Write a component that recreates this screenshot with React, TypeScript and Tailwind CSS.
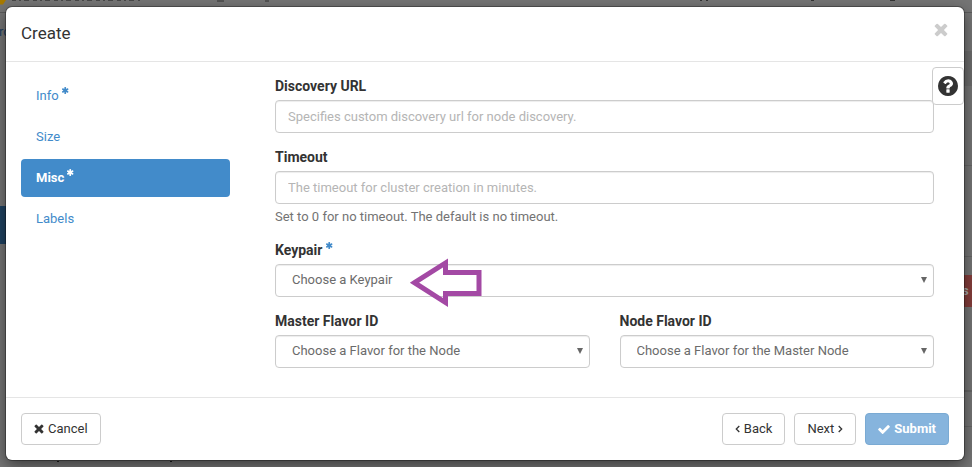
import type { ReactNode } from "react";

type GlyphProps = { d: string; box: string; w: number; h: number };

function Glyph({ d, box: viewBox, w, h }: GlyphProps) {
  return <svg aria-hidden="true" className="shrink-0" width={w} height={h} viewBox={viewBox} fill="currentColor"><path d={d} /></svg>;
}

const timesPath = "M1490 1322q0 40-28 68l-136 136q-28 28-68 28t-68-28l-294-294-294 294q-28 28-68 28t-68-28l-136-136q-28-28-28-68t28-68l294-294-294-294q-28-28-28-68t28-68l136-136q28-28 68-28t68 28l294 294 294-294q28-28 68-28t68 28l136 136q28 28 28 68t-28 68l-294 294 294 294q28 28 28 68z";
const checkPath = "M1671 566q0 40-28 68l-724 724-136 136q-28 28-68 28t-68-28l-136-136-362-362q-28-28-28-68t28-68l136-136q28-28 68-28t68 28l294 295 656-657q28-28 68-28t68 28l136 136q28 28 28 68z";
const questionPath = "M1024 1376v-192q0-14-9-23t-23-9h-192q-14 0-23 9t-9 23v192q0 14 9 23t23 9h192q14 0 23-9t9-23zm256-672q0-88-55.5-163t-138.5-116-170-41q-243 0-371 213-15 24 8 42l132 100q7 6 19 6 16 0 25-12 53-68 86-92 34-24 86-24 48 0 85.5 26t37.5 59q0 38-20 61t-68 45q-63 28-115.5 86.5t-52.5 125.5v36q0 14 9 23t23 9h192q14 0 23-9t9-23q0-19 21.5-49.5t54.5-49.5q32-18 49-28.5t46-35 44.5-48 28-60.5 12.5-81zm384 192q0 209-103 385.5t-279.5 279.5-385.5 103-385.5-103-279.5-279.5-103-385.5 103-385.5 279.5-279.5 385.5-103 385.5 103 279.5 279.5 103 385.5z";
const asteriskPath = "M1482 1050q46 26 59.5 77.5t-12.5 97.5l-64 110q-26 46-77.5 59.5t-97.5-12.5l-266-153v307q0 52-38 90t-90 38h-128q-52 0-90-38t-38-90v-307l-266 153q-46 26-97.5 12.5t-77.5-59.5l-64-110q-26-46-12.5-97.5t59.5-77.5l266-154-266-154q-46-26-59.5-77.5t12.5-97.5l64-110q26-46 77.5-59.5t97.5 12.5l266 153v-307q0-52 38-90t90-38h128q52 0 90 38t38 90v307l266-153q46-26 97.5-12.5t77.5 59.5l64 110q26 46 12.5 97.5t-59.5 77.5l-266 154z";

function Cross({ size }: { size: number }) {
  return <Glyph d={timesPath} box="302 302 1188 1316" w={size} h={size} />;
}

function Chevron({ left }: { left?: boolean }) {
  return (
    <svg aria-hidden="true" width="5" height="8" viewBox="0 0 5 8" fill="none" stroke="currentColor" strokeWidth="1.3">
      <path d={left ? "M4.3 1L1.3 4l3 3" : "M.7 1l3 3-3 3"} />
    </svg>
  );
}

function Star() {
  return <span className="ml-[3px] inline-block align-super"><Glyph d={asteriskPath} box="190 128 1412 1536" w={7} h={7} /></span>;
}

function Field({ id, label, required, children }: { id: string; label: string; required?: boolean; children: ReactNode }) {
  return (
    <div className="mb-[15px] min-w-0 flex-1">
      <label htmlFor={id} className="mb-[5px] flex h-[18px] text-sm font-bold leading-[18px]">
        {label}
        {required && <span className="ml-1 mt-px text-[#428bca]"><Glyph d={asteriskPath} box="190 128 1412 1536" w={7} h={7} /></span>}
      </label>
      {children}
    </div>
  );
}

const control = "block h-[33px] w-full rounded border border-[#ccc] bg-white px-3 pb-px text-[13px] text-[#6b6b6b] shadow-[inset_0_1px_1px_rgba(0,0,0,0.075)] placeholder:text-[#b5b5b5]";

function Select({ id, option }: { id: string; option: string }) {
  return (
    <div className="relative">
      <select id={id} className={control + " appearance-none pl-4"}><option>{option}</option></select>
      <svg aria-hidden="true" className="pointer-events-none absolute right-[7px] top-[13px] text-[#666]" width="6" height="6" viewBox="0 0 6 6"><path d="M0 0h6L3 6z" fill="currentColor" /></svg>
    </div>
  );
}

const button = "flex h-8 items-center gap-1 rounded border border-[#ccc] bg-white px-3";

const tabs = [{ name: "Info", required: true }, { name: "Size" }, { name: "Misc", required: true, active: true }, { name: "Labels" }];

function Backdrop() {
  return (
    <div aria-hidden="true" className="absolute inset-0 bg-[#757575]">
      <div className="absolute inset-x-0 top-3 h-px bg-[#5c5c5c]" />
      <div className="absolute left-0 top-[206px] h-[38px] w-3 bg-[#1f4261]" />
      <div className="absolute -left-px top-[23px] text-[#1f3f5f]">ro</div>
      <div className="absolute right-0 top-[51px] h-[35px] w-3 bg-[#6c6c6c]" />
      <div className="absolute right-0 top-[165px] h-px w-3 bg-[#666]" />
      <div className="absolute right-0 top-64 h-px w-3 bg-[#666]" />
      <div className="absolute right-0 top-[275px] h-8 w-3 bg-[#853d3b] pl-0.5 pt-[7px] font-bold text-[#aaa]">s</div>
      <div className="absolute right-0 top-[390px] h-0.5 w-3 bg-[#666]" />
      <div className="absolute right-0 top-[426px] h-px w-3 bg-[#666]" />
      <svg className="absolute left-0 top-0" width="960" height="5" viewBox="0 0 960 5" fill="none" stroke="#333">
        <path d="M0 0h6L3 4.500H0z" fill="#a87a00" stroke="none" />
        <path d="M12 .5h128" strokeDasharray="4 3 2 3 5 4" stroke="#484848" />
        <path d="M217 1h7M265 1h4M700 .5h2M706 .5h2M811 .5h3M890 .5h5" />
      </svg>
      <svg className="absolute left-[57px] top-[460px]" width="120" height="3" viewBox="0 0 120 3" stroke="#1c1c1c"><path d="M0 1.500h2M113 1.500h2" /></svg>
    </div>
  );
}

export default function App() {
  return (
    <div className="relative min-h-screen overflow-hidden pb-1.5 pl-1.5 pr-2 pt-[7px] font-[Roboto,sans-serif] text-[13px] leading-[18px] text-[#333]">
      <Backdrop />
      <div role="dialog" aria-label="Create" className="relative rounded-md bg-white shadow-[0_0_0_1px_rgba(0,0,0,0.3),0_5px_15px_rgba(0,0,0,0.5)]">
        <header className="flex h-[55px] items-start justify-between border-b border-[#e5e5e5] px-[15px] pt-4">
          <h1 className="text-[17px] leading-5">Create</h1>
          <button aria-label="Close" className="mr-px text-[#ccc]"><Cross size={14} /></button>
        </header>
        <button aria-label="Help" className="absolute right-0 top-[60px] z-10 flex h-[38px] w-8 items-center justify-center rounded border border-[#ccc] bg-white">
          <Glyph d={questionPath} box="128 128 1536 1536" w={20} h={20} />
        </button>
        <div className="flex px-[15px] pb-3.5 pt-[15px]">
          <nav className="mr-[45px] flex w-[209px] flex-col gap-[3px]">
            {tabs.map((t) => (
              <a key={t.name} href="#" className={t.active ? "flex h-[38px] rounded bg-[#428bca] px-[15px] py-2.5 font-bold text-white" : "flex h-[38px] rounded px-[15px] py-2.5 text-[#428bca]"}>
                {t.name}
                {t.required && <Star />}
              </a>
            ))}
          </nav>
          <main className="min-w-0 flex-1 pr-[15px]">
            <Field id="url" label="Discovery URL"><input id="url" className={control} placeholder="Specifies custom discovery url for node discovery." /></Field>
            <Field id="timeout" label="Timeout">
              <input id="timeout" className={control} placeholder="The timeout for cluster creation in minutes." />
              <p className="mt-1 text-[#737373]">Set to 0 for no timeout. The default is no timeout.</p>
            </Field>
            <div className="relative flex">
              <Field id="key" label="Keypair" required><Select id="key" option="Choose a Keypair" /></Field>
              <svg aria-hidden="true" className="pointer-events-none absolute left-[133px] top-4" width="76" height="52" viewBox="0 0 76 52" fill="none" stroke="#a349a4" strokeWidth="5">
                <path d="M6.500 25.700L37.500 6v9.500H71v21H37.500v9z" />
              </svg>
            </div>
            <div className="flex gap-[30px]">
              <Field id="master" label="Master Flavor ID"><Select id="master" option="Choose a Flavor for the Node" /></Field>
              <Field id="node" label="Node Flavor ID"><Select id="node" option="Choose a Flavor for the Master Node" /></Field>
            </div>
          </main>
        </div>
        <footer className="flex gap-[9px] border-t border-[#e5e5e5] p-[15px]">
          <button className={button}><Cross size={10} />Cancel</button>
          <button className={button + " ml-auto"}><Chevron left />Back</button>
          <button className={button}>Next<Chevron /></button>
          <button disabled className="flex h-8 items-center gap-1 rounded border border-[#7aaad3] bg-[#86b4dd] px-3 font-bold text-white">
            <Glyph d={checkPath} box="121 334 1550 1188" w={12} h={9} />Submit
          </button>
        </footer>
      </div>
    </div>
  );
}
